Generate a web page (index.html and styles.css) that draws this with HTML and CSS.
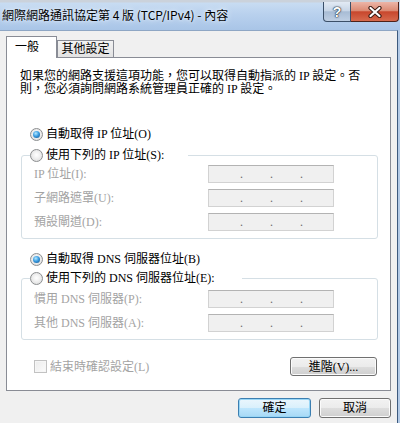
FILE: index.html
```html
<!DOCTYPE html>
<html lang="zh-Hant">
<head>
<meta charset="utf-8">
<title>網際網路通訊協定第 4 版 (TCP/IPv4) - 內容</title>
<link rel="stylesheet" href="styles.css">
</head>
<body>
<div class="window">
  <div class="titlebar">
    <span class="title">網際網路通訊協定第 4 版 (TCP/IPv4) - 內容</span>
    <div class="caption-buttons">
      <span class="cap-btn help">?</span>
      <span class="cap-btn close">
        <svg width="14" height="12" viewBox="0 0 14 12">
          <path d="M2.5 2 L11.5 10 M11.5 2 L2.5 10" stroke="#3a1a12" stroke-width="4.2" stroke-linecap="round" fill="none"/>
          <path d="M2.5 2 L11.5 10 M11.5 2 L2.5 10" stroke="#ffffff" stroke-width="2.2" stroke-linecap="round" fill="none"/>
        </svg>
      </span>
    </div>
  </div>
  <div class="client">
    <div class="tabs">
      <div class="tab tab-active">一般</div>
      <div class="tab tab-inactive">其他設定</div>
    </div>
    <div class="panel">
      <p class="desc">如果您的網路支援這項功能，您可以取得自動指派的 IP 設定。否<br>則，您必須詢問網路系統管理員正確的 IP 設定。</p>

      <div class="radio-row radio-ip"><span class="radio checked"></span>自動取得 IP 位址(O)</div>
      <fieldset class="group group-ip">
        <legend class="legend legend-ip"><span class="radio"></span>使用下列的 IP 位址(S):</legend>
        <div class="field-row"><span class="field-label">IP 位址(I):</span><span class="ipbox"><span class="dot">.</span><span class="dot">.</span><span class="dot">.</span></span></div>
        <div class="field-row"><span class="field-label">子網路遮罩(U):</span><span class="ipbox"><span class="dot">.</span><span class="dot">.</span><span class="dot">.</span></span></div>
        <div class="field-row"><span class="field-label">預設閘道(D):</span><span class="ipbox"><span class="dot">.</span><span class="dot">.</span><span class="dot">.</span></span></div>
      </fieldset>

      <div class="radio-row radio-dns"><span class="radio checked"></span>自動取得 DNS 伺服器位址(B)</div>
      <fieldset class="group group-dns">
        <legend class="legend legend-dns"><span class="radio"></span>使用下列的 DNS 伺服器位址(E):</legend>
        <div class="field-row"><span class="field-label">慣用 DNS 伺服器(P):</span><span class="ipbox"><span class="dot">.</span><span class="dot">.</span><span class="dot">.</span></span></div>
        <div class="field-row"><span class="field-label">其他 DNS 伺服器(A):</span><span class="ipbox"><span class="dot">.</span><span class="dot">.</span><span class="dot">.</span></span></div>
      </fieldset>

      <div class="panel-footer">
        <span class="checkbox"></span><span class="check-label">結束時確認設定(L)</span>
        <button class="btn btn-advanced" type="button">進階(V)...</button>
      </div>
    </div>
    <div class="dialog-buttons">
      <button class="btn btn-default btn-ok" type="button">確定</button>
      <button class="btn btn-cancel" type="button">取消</button>
    </div>
  </div>
</div>
</body>
</html>
```
FILE: styles.css
```css
* { box-sizing: border-box; }
html, body { margin: 0; padding: 0; }
body {
  width: 400px;
  height: 423px;
  overflow: hidden;
  background: #f0f0f0;
  font-family: "Liberation Serif", "Noto Sans CJK TC", serif;
  font-size: 12px;
  color: #000;
}
.window {
  width: 400px;
  height: 423px;
  display: flex;
  flex-direction: column;
  background: #b3cae6;
}

/* title bar */
.titlebar {
  height: 30px;
  flex: none;
  display: flex;
  align-items: flex-start;
  padding-left: 2px;
  background: linear-gradient(to bottom, #cbd2db 0, #cbd2db 2px, #c8dcf2 3px, #b9d1ee 14px, #a9c5e7 30px);
}
.title {
  align-self: center;
  font-family: "Noto Sans CJK TC", sans-serif;
  font-size: 12px;
  line-height: 16px;
  white-space: nowrap;
  color: #000;
  text-shadow: 0 0 6px #e9f2fc, 0 0 3px #e9f2fc;
}
.caption-buttons {
  margin-left: auto;
  margin-right: 1px;
  margin-top: 2px;
  display: flex;
}
.cap-btn {
  height: 20px;
  display: flex;
  align-items: center;
  justify-content: center;
  border: 1px solid #3b4f68;
  border-top: none;
}
.help {
  width: 28px;
  border-radius: 0 0 0 4px;
  background: linear-gradient(#e2eaf4, #c8d6e7 45%, #a8bcd5 52%, #bfcfe3);
  font: bold 14px "Liberation Sans", sans-serif;
  color: #fff;
  text-shadow: 0 0 2px #1e2c3e, 0 0 1px #1e2c3e, 0 0 1px #1e2c3e;
}
.close {
  width: 48px;
  border-left: none;
  border-color: #4e2118;
  border-radius: 0 0 4px 0;
  background: linear-gradient(#ecb5a7, #dc8b74 45%, #c8472d 52%, #d66a4d);
}

/* client area */
.client {
  flex: 1;
  margin-right: 2px;
  border-top: 1px solid #8ea6c4;
  border-right: 1px solid #3d5a7e;
  background: #f0f0f0;
  padding: 5px 6px 0 6px;
}

/* tabs */
.tabs {
  display: flex;
  align-items: flex-end;
  margin-bottom: -1px;
  position: relative;
  z-index: 1;
}
.tab {
  border: 1px solid #898c95;
  border-bottom: none;
  white-space: nowrap;
}
.tab-active {
  width: 51px;
  height: 22px;
  background: #fff;
  padding-left: 8px;
  line-height: 20px;
}
.tab-inactive {
  width: 57px;
  height: 17px;
  margin-bottom: 1px;
  background: linear-gradient(#f3f3f3, #e2e2e2);
  text-align: center;
  line-height: 16px;
}

/* panel */
.panel {
  height: 334px;
  background: #fff;
  border: 1px solid #898c95;
  padding-top: 12px;
}
.desc {
  margin: 0 0 0 13px;
  line-height: 13px;
  white-space: nowrap;
}
.radio-row {
  display: flex;
  align-items: center;
  height: 16px;
  line-height: 16px;
  margin-left: 23px;
  white-space: nowrap;
}
.radio-ip { margin-top: 30px; }
.radio-dns { margin-top: 12px; }

.radio {
  width: 13px;
  height: 13px;
  flex: none;
  border-radius: 50%;
  border: 1px solid #8c8e90;
  background: radial-gradient(circle at 50% 45%, #ffffff 0, #f3f3f3 35%, #d6d6d6 100%);
  margin-right: 3px;
  display: flex;
  align-items: center;
  justify-content: center;
}
.radio.checked::after {
  content: "";
  width: 7px;
  height: 7px;
  border-radius: 50%;
  background: radial-gradient(circle at 40% 35%, #b4e8ff 0, #3c9ee2 45%, #0e4c86 100%);
}

.group {
  margin: 0 12px 0 14px;
  padding: 2px 0 7px 8px;
  border: 1px solid #d5dfe5;
  border-radius: 3px;
  min-width: 0;
}
.group-ip { margin-top: 5px; }
.group-dns { margin-top: 3px; padding-top: 4px; }
.legend {
  padding: 0;
  display: flex;
  align-items: center;
  height: 16px;
  line-height: 16px;
  white-space: nowrap;
}
.legend-ip { width: 158px; }
.legend-dns { width: 212px; }

.field-row {
  display: flex;
  align-items: center;
  height: 18px;
  margin-left: 4px;
}
.field-row + .field-row { margin-top: 6px; }
.field-label {
  width: 174px;
  color: #a3a3a3;
  line-height: 16px;
  white-space: nowrap;
}
.ipbox {
  width: 126px;
  height: 18px;
  border: 1px solid #d2d2d2;
  border-top-color: #b3b3b3;
  background: #f0f0f0;
  display: flex;
  padding-left: 31px;
  line-height: 16px;
  color: #6a6a6a;
}
.dot { width: 30px; }

.panel-footer {
  display: flex;
  align-items: center;
  height: 19px;
  margin: 17px 13px 0 27px;
}
.checkbox {
  width: 13px;
  height: 13px;
  flex: none;
  border: 1px solid #c2c2c2;
  background: linear-gradient(135deg, #ececec, #fbfbfb);
  box-shadow: inset 0 0 0 1px #f6f6f6;
  margin-right: 3px;
}
.check-label {
  color: #a3a3a3;
  line-height: 16px;
  white-space: nowrap;
}

/* buttons */
.btn {
  display: flex;
  align-items: center;
  justify-content: center;
  padding: 0;
  border: 1px solid #707070;
  border-radius: 3px;
  background: linear-gradient(#f2f2f2 0%, #ebebeb 50%, #dddddd 51%, #cfcfcf 100%);
  box-shadow: inset 0 0 0 1px #fbfbfb;
  font-family: inherit;
  font-size: 12px;
  line-height: 16px;
  color: #000;
  white-space: nowrap;
}
.btn-advanced {
  width: 87px;
  height: 19px;
  margin-left: auto;
}
.dialog-buttons {
  display: flex;
  justify-content: flex-end;
  gap: 8px;
  margin-top: 7px;
}
.btn-ok { width: 73px; height: 20px; }
.btn-cancel { width: 72px; height: 20px; }
.btn-default {
  border-color: #3c7fb1;
  background: linear-gradient(#eaf6fd 0%, #d9f0fc 50%, #bee6fd 51%, #a7d9f5 100%);
  box-shadow: inset 0 0 0 1px #98d6f6;
}
```
